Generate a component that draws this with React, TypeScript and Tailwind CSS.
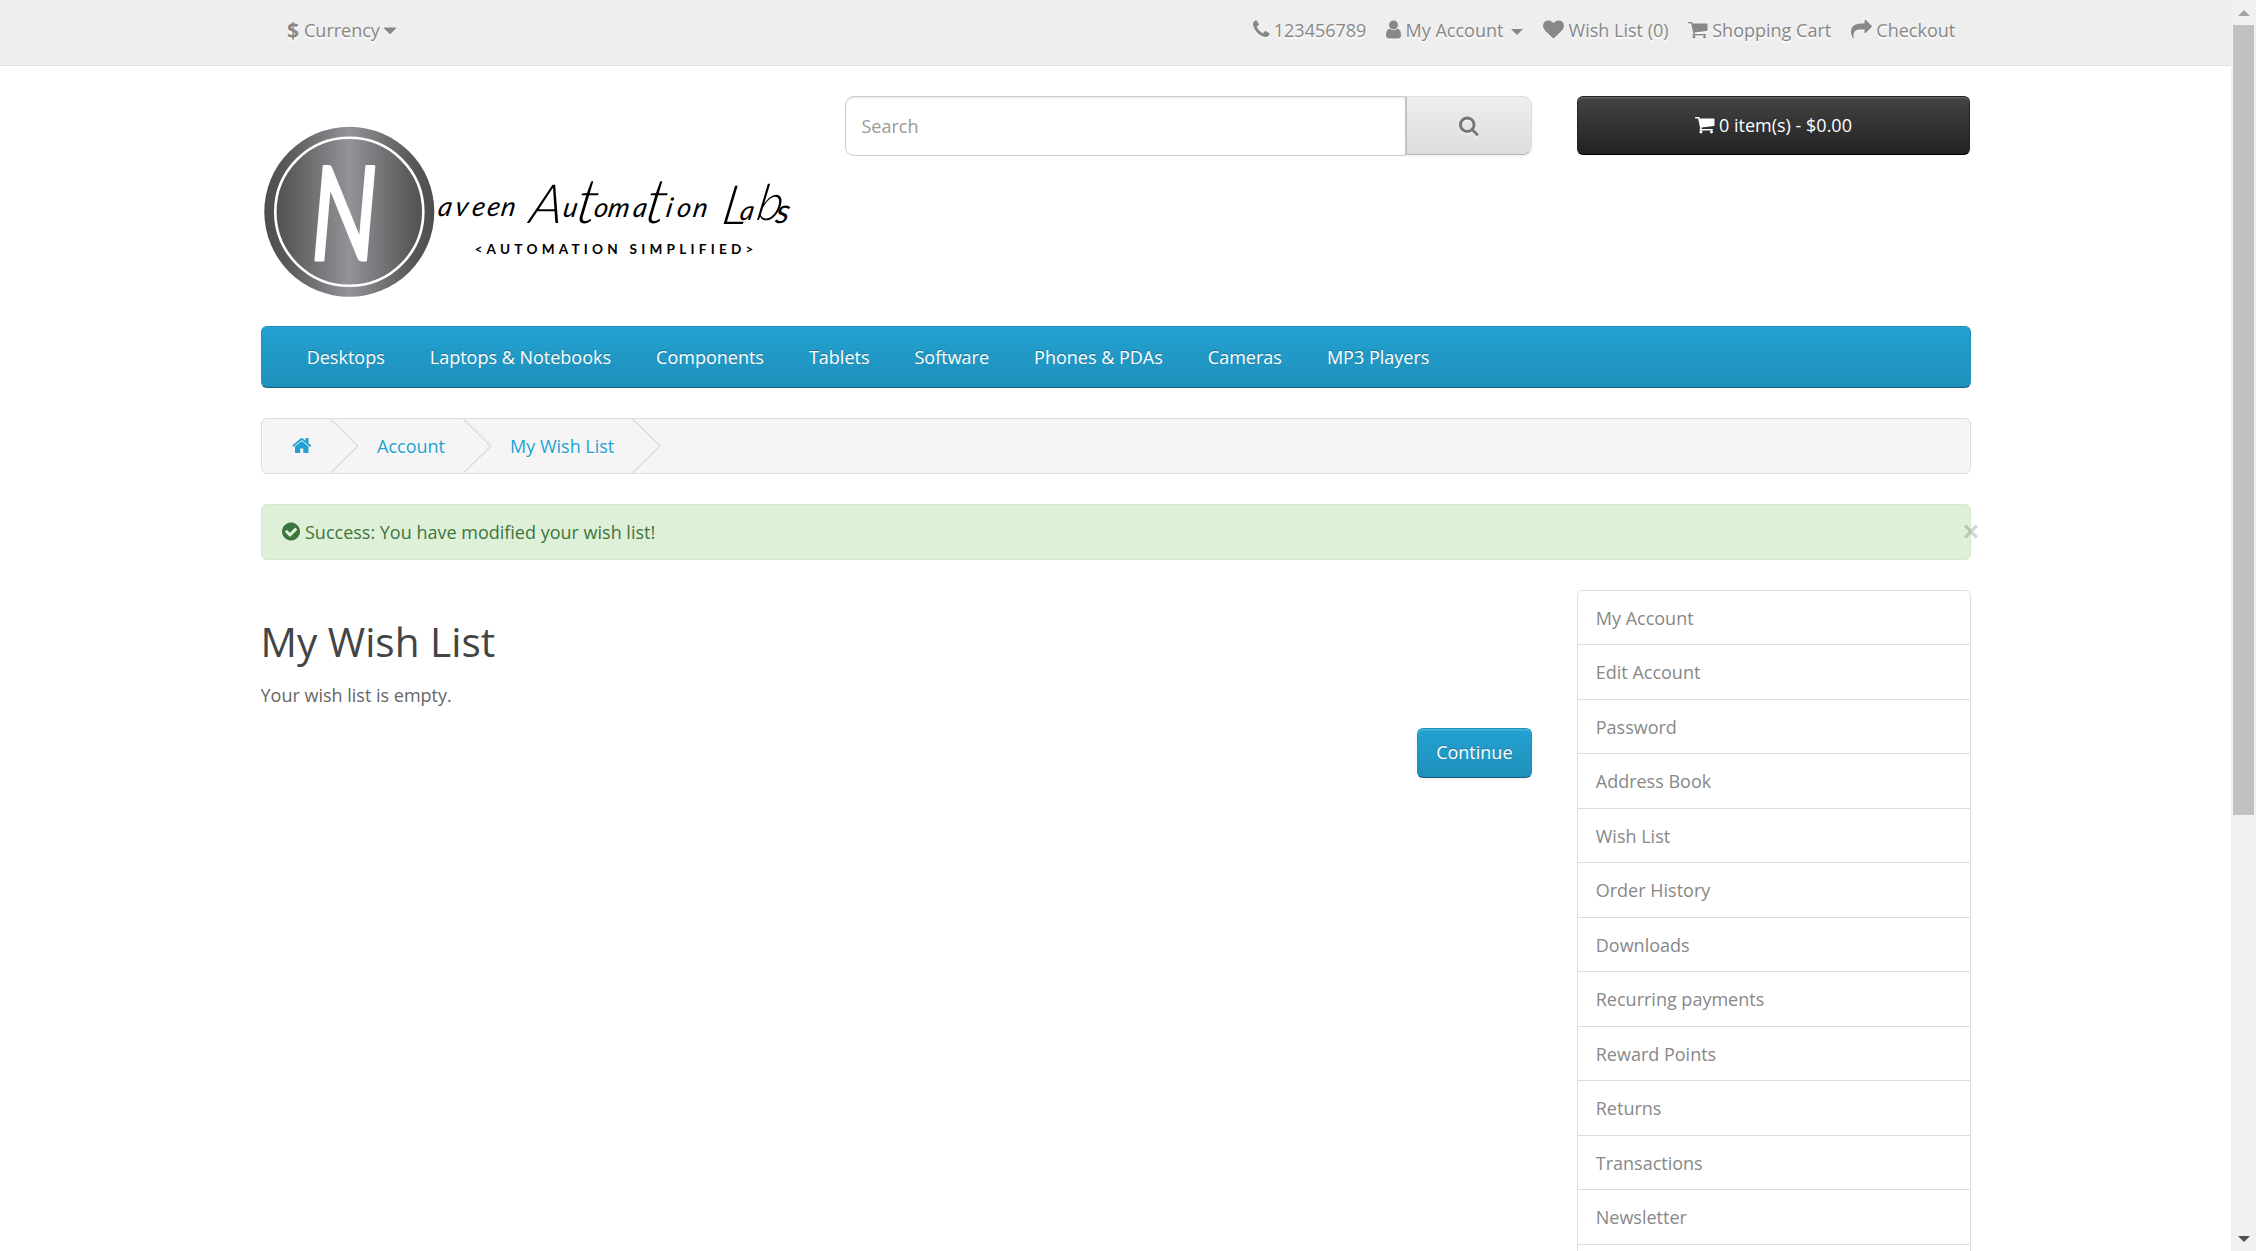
import React from "react";

type IconProps = { box: string; d: string; w: string };

function Icon({ box, d, w }: IconProps) {
  return (
    <svg
      viewBox={box}
      className={`inline-block h-[21px] shrink-0 fill-current align-[-3px] ${w}`}
      aria-hidden="true"
      overflow="visible"
    >
      <path d={d} />
    </svg>
  );
}

const ICONS = {
  phone: {
    box: "192 0 1408 1792",
    w: "w-[16.5px]",
    d: "M1600 1240q0 27-10 70.5t-21 68.5q-21 50-122 106-94 51-186 51-27 0-52.5-3.5t-57.5-12.5-47.5-14.5-55.5-20.5-49-18q-98-35-175-83-128-79-264.5-215.5t-215.5-264.5q-48-77-83-175-3-9-18-49t-20.5-55.5-14.5-47.5-12.5-57.5-3.5-52.5q0-92 51-186 56-101 106-122 25-11 68.5-21t70.5-10q14 0 21 3 18 6 53 76 11 19 30 54t35 63.5 31 53.5q3 4 17.5 25t21.5 35.5 7 28.5q0 20-28.5 50t-62 55-62 53-28.5 46q0 9 5 22.5t8.5 20.5 14 24 11.5 19q76 137 174 235t235 174q2 1 19 11.5t24 14 20.5 8.5 22.5 5q18 0 46-28.5t53-62 55-62 50-28.5q14 0 28.5 7t35.5 21.5 25 17.5q25 15 53.5 31t63.5 35 54 30q70 35 76 53 3 7 3 21z",
  },
  user: {
    box: "256 0 1280 1792",
    w: "w-[15px]",
    d: "M1536 1399q0 109-62.5 187t-150.5 78h-854q-88 0-150.5-78t-62.5-187q0-85 8.5-160.5t31.5-152 58.5-131 94-89 134.5-34.5q131 128 313 128t313-128q76 0 134.5 34.5t94 89 58.5 131 31.5 152 8.5 160.5zm-256-887q0 159-112.5 271.5t-271.5 112.5-271.5-112.5-112.5-271.5 112.5-271.5 271.5-112.5 271.5 112.5 112.5 271.5z",
  },
  heart: {
    box: "0 0 1792 1792",
    w: "w-[21px]",
    d: "M896 1664q-26 0-44-18l-624-602q-10-8-27.5-26t-55.5-65.5-68-97.5-53.5-121-23.5-138q0-220 127-344t351-124q62 0 126.5 21.5t120 58 95.5 68.5 76 68q36-36 76-68t95.5-68.5 120-58 126.5-21.5q224 0 351 124t127 344q0 221-229 450l-623 600q-18 18-44 18z",
  },
  cart: {
    box: "64 0 1664 1792",
    w: "w-[19.5px]",
    d: "M704 1536q0 52-38 90t-90 38-90-38-38-90 38-90 90-38 90 38 38 90zm896 0q0 52-38 90t-90 38-90-38-38-90 38-90 90-38 90 38 38 90zm128-1088v512q0 24-16.5 42.5t-40.5 21.5l-1044 122q13 60 13 70 0 16-24 64h920q26 0 45 19t19 45-19 45-45 19h-1024q-26 0-45-19t-19-45q0-11 8-31.5t16-36 21.5-40 15.5-29.5l-177-823h-204q-26 0-45-19t-19-45 19-45 45-19h256q16 0 28.5 6.5t19.5 15.5 13 24.5 8 26 5.5 29.5 4.5 26h1201q26 0 45 19t19 45z",
  },
  share: {
    box: "0 0 1792 1792",
    w: "w-[21px]",
    d: "M1792 640q0 26-19 45l-512 512q-19 19-45 19t-45-19-19-45v-256h-224q-98 0-175.5 6t-154 21.5-133 42.5-105.5 69.5-80 101-48.5 138.5-17.5 181q0 55 5 123 0 6 2.5 23.5t2.5 26.5q0 15-8.5 25t-23.5 10q-16 0-28-17-7-9-13-22t-13.5-30-10.5-24q-127-285-127-451 0-199 53-333 162-403 875-403h224v-256q0-26 19-45t45-19 45 19l512 512q19 19 19 45z",
  },
  search: {
    box: "64 0 1664 1792",
    w: "w-[19.5px]",
    d: "M1216 832q0-185-131.5-316.5t-316.5-131.5-316.5 131.5-131.5 316.5 131.5 316.5 316.5 131.5 316.5-131.5 131.5-316.5zm512 832q0 52-38 90t-90 38q-54 0-90-38l-343-342q-179 124-399 124-143 0-273.5-55.5t-225-150-150-225-55.5-273.5 55.5-273.5 150-225 225-150 273.5-55.5 273.5 55.5 225 150 150 225 55.5 273.5q0 220-124 399l343 343q37 37 37 90z",
  },
  home: {
    box: "64 0 1664 1792",
    w: "w-[19.5px]",
    d: "M1472 992v480q0 26-19 45t-45 19h-384v-384h-256v384h-384q-26 0-45-19t-19-45v-480q0-1 .5-3t.5-3l575-474 575 474q1 2 1 6zm223-69l-62 74q-8 9-21 11h-3q-13 0-21-7l-692-577-692 577q-12 8-24 7-13-2-21-11l-62-74q-8-10-7-23.5t11-21.5l719-599q32-26 76-26t76 26l244 204v-195q0-14 9-23t23-9h192q14 0 23 9t9 23v408l219 182q10 8 11 21.5t-7 23.5z",
  },
  check: {
    box: "128 0 1536 1792",
    w: "w-[18px]",
    d: "M1412 734q0-28-18-46l-91-90q-19-19-45-19t-45 19l-408 407-226-226q-19-19-45-19t-45 19l-91 90q-18 18-18 46 0 27 18 45l362 362q19 19 45 19 27 0 46-19l543-543q18-18 18-45zm252 162q0 209-103 385.5t-279.5 279.5-385.5 103-385.5-103-279.5-279.5-103-385.5 103-385.5 279.5-279.5 385.5-103 385.5 103 279.5 279.5 103 385.5z",
  },
  caret: {
    box: "384 0 1024 1792",
    w: "w-[12px]",
    d: "M1408 704q0 26-19 45l-448 448q-19 19-45 19t-45-19l-448-448q-19-19-19-45t19-45 45-19h896q26 0 45 19t19 45z",
  },
};

const MENU = [
  "Desktops",
  "Laptops & Notebooks",
  "Components",
  "Tablets",
  "Software",
  "Phones & PDAs",
  "Cameras",
  "MP3 Players",
];

const ACCOUNT_LINKS = [
  "My Account",
  "Edit Account",
  "Password",
  "Address Book",
  "Wish List",
  "Order History",
  "Downloads",
  "Recurring payments",
  "Reward Points",
  "Returns",
  "Transactions",
  "Newsletter",
];

function Chevron() {
  return (
    <svg viewBox="0 0 29 54" className="h-[54px] w-[29px] shrink-0" fill="none" stroke="#dddddd" strokeWidth="1.5">
      <path d="M0.5 0L28 27L0.5 54" />
    </svg>
  );
}

function Logo() {
  return (
    <svg viewBox="261 120 560 184" className="block h-[184px] w-[560px]">
      <defs>
        <linearGradient id="badge" x1="0" x2="1" y1="0" y2="0">
          <stop offset="0" stopColor="#4f4e4d" />
          <stop offset="0.12" stopColor="#575756" />
          <stop offset="0.5" stopColor="#919398" />
          <stop offset="0.88" stopColor="#575756" />
          <stop offset="1" stopColor="#4f4e4d" />
        </linearGradient>
      </defs>
      <circle cx="349.3" cy="211.8" r="85" fill="url(#badge)" />
      <circle cx="349.3" cy="211.8" r="74" fill="none" stroke="#fff" strokeWidth="2.6" />
      <text
        transform="translate(311 260) scale(0.72 1)"
        fontFamily="Lato, sans-serif"
        fontStyle="italic"
        fontWeight="400"
        fontSize="130"
        fill="#fff"
        stroke="#fff"
        strokeWidth="3"
        strokeLinejoin="round"
      >
        N
      </text>
      <g
        fontFamily="Lato, sans-serif"
        fontStyle="italic"
        fontWeight="400"
        fontSize="27"
        fill="#000"
      >
        <text transform="translate(437 216) skewX(-10)" x="0 17 34 49 63">
          aveen
        </text>
        <text
          transform="translate(531 217) skewX(-10)"
          x="-2 31 44 62 76 101 113 134 145 161"
          y="6 0 6 0 0 0 6 0 0 0"
        >
          <tspan fontSize="54" fontWeight="300">A</tspan>u<tspan fontSize="62" fontWeight="300">t</tspan>oma
          <tspan fontSize="62" fontWeight="300">t</tspan>ion
        </text>
        <text transform="translate(721 220) skewX(-10)" x="0 18 34 54" y="4 0 0 3">
          <tspan fontSize="54" fontWeight="300">L</tspan>a<tspan fontSize="50" fontWeight="300">b</tspan>
          <tspan fontSize="34">s</tspan>
        </text>
      </g>
      <text
        x="474.5"
        y="254.3"
        fontFamily="Lato, sans-serif"
        fontWeight="700"
        fontSize="13.6"
        textLength="279"
        fill="#000"
      >
        &lt;AUTOMATION SIMPLIFIED&gt;
      </text>
    </svg>
  );
}

export default function App() {
  return (
    <div className="flex h-[1251px] w-[2256px] overflow-hidden bg-white font-['Open_Sans',sans-serif] text-[18px] leading-[30px] text-[#666666]">
      <div className="flex min-w-0 flex-1 flex-col">
        <nav className="h-[66px] shrink-0 border-b border-[#e2e2e2] bg-[#eeeeee] text-[#888888]">
          <div className="mx-auto flex h-[60px] w-[1710px] items-center justify-between pr-[15.3px] pl-[26.5px] whitespace-nowrap [text-shadow:0_1.5px_0_#fff] [&_svg]:[filter:drop-shadow(0_1.5px_0_#fff)]">
            <div className="flex items-center">
              <span className="mr-[5px] text-[21px] font-bold">$</span>
              <span className="mr-[4.5px]">Currency</span>
              <Icon {...ICONS.caret} />
            </div>
            <div className="flex items-center gap-[19.5px]">
              <span>
                <Icon {...ICONS.phone} /> 123456789
              </span>
              <span className="flex items-center">
                <span>
                  <Icon {...ICONS.user} /> My Account
                </span>
                <span className="mt-[4px] ml-[8px] border-x-[6px] border-t-[6px] border-x-transparent border-t-[#888888]" />
              </span>
              <span>
                <Icon {...ICONS.heart} /> Wish List (0)
              </span>
              <span>
                <Icon {...ICONS.cart} /> Shopping Cart
              </span>
              <span>
                <Icon {...ICONS.share} /> Checkout
              </span>
            </div>
          </div>
        </nav>

        <div className="mx-auto flex min-h-0 w-[1710px] flex-1 flex-col">
          <header className="flex h-[260px] shrink-0 items-start pt-[30px]">
            <div className="w-[584.5px] pt-[24px]">
              <Logo />
            </div>
            <div className="flex w-[687px]">
              <div className="flex h-[60px] flex-1 items-center rounded-l-[9px] border border-[#cccccc] bg-white px-[15.5px] text-[#999999] shadow-[inset_0_1.5px_1.5px_rgba(0,0,0,0.075)]">
                Search
              </div>
              <button className="flex h-[59px] w-[126.5px] items-center justify-center rounded-r-[9px] border border-[#dddddd] border-b-[#b3b3b3] border-l-[#bfbfbf] bg-linear-to-b from-[#eeeeee] to-[#dddddd] text-[#777777] shadow-[0_1.5px_3px_rgba(0,0,0,0.05)] [&_svg]:[filter:drop-shadow(0_1.5px_0_#fff)]">
                <Icon {...ICONS.search} />
              </button>
            </div>
            <button className="mr-[0.6px] ml-auto h-[59px] w-[393px] rounded-[6px] border border-[#222222] border-b-black bg-linear-to-b from-[#444444] to-[#222222] pb-px text-white shadow-[inset_0_1.5px_0_rgba(255,255,255,0.15)]">
              <Icon {...ICONS.cart} /> 0 item(s) - $0.00
            </button>
          </header>

          <nav className="flex h-[62px] shrink-0 items-center gap-[45px] rounded-[6px] border border-[#1f90bb] border-b-[#145e7a] bg-linear-to-b from-[#23a1d1] to-[#1f90bb] pl-[45.2px] whitespace-nowrap text-white [text-shadow:0_-1px_0_rgba(0,0,0,0.25)]">
            {MENU.map((item) => (
              <a key={item}>{item}</a>
            ))}
          </nav>

          <div className="mt-[30px] flex h-[56px] shrink-0 items-center rounded-[6px] border border-[#dddddd] bg-[#f5f5f5] whitespace-nowrap text-[#23a1d1] [text-shadow:0_1.5px_0_#fff]">
            <span className="w-[68px] pl-[30.8px]">
              <Icon {...ICONS.home} />
            </span>
            <Chevron />
            <span className="ml-[18.5px] w-[85.5px]">Account</span>
            <Chevron />
            <span className="ml-[18.5px] w-[121.5px]">My Wish List</span>
            <Chevron />
          </div>

          <div className="relative mt-[30px] flex h-[56px] shrink-0 items-center rounded-[6px] border border-[#d6e9c6] bg-[#dff0d8] pl-[20.8px] text-[#3c763d]">
            <span>
              <Icon {...ICONS.check} /> Success: You have modified your wish list!
            </span>
            <span className="absolute top-[10px] right-[-10.5px] text-[31.5px] leading-[31.5px] font-bold text-black opacity-[0.16] [text-shadow:0_1.5px_0_#fff]">
              ×
            </span>
          </div>

          <div className="mt-[30px] flex min-h-0 flex-1 items-start justify-between overflow-hidden">
            <main className="flex w-[1271.5px] flex-col pt-[29px]">
              <h2 className="text-[40.5px] leading-[45px] text-[#444444]">My Wish List</h2>
              <p className="mt-[16px]">Your wish list is empty.</p>
              <button className="mt-[18px] h-[50px] self-end rounded-[6px] border border-[#1f90bb] border-b-[#145e7a] bg-linear-to-b from-[#23a1d1] to-[#1f90bb] px-[18.5px] pb-[2px] text-white shadow-[inset_0_1.5px_0_rgba(255,255,255,0.2),0_1.5px_3px_rgba(0,0,0,0.05)] [text-shadow:0_-1px_0_rgba(0,0,0,0.25)]">
                Continue
              </button>
            </main>
            <aside className="-mt-[0.1px] w-[393.75px] rounded-t-[6px] border-x border-[#dddddd] text-[#888888]">
              {ACCOUNT_LINKS.map((item) => (
                <a
                  key={item}
                  className="block h-[54.5px] border-t border-[#dddddd] pt-[12px] pl-[18px] first:-mx-px first:rounded-t-[6px] first:px-[19px]"
                >
                  {item}
                </a>
              ))}
              <div className="h-[54.5px] border-t border-[#dddddd]" />
            </aside>
          </div>
        </div>
      </div>

      <div className="flex w-[25px] shrink-0 flex-col items-center bg-[#f1f1f1]">
        <div className="flex h-[25px] items-center">
          <span className="border-x-[6px] border-b-[6px] border-x-transparent border-b-[#a3a3a3]" />
        </div>
        <div className="h-[790px] w-[21px] bg-[#c1c1c1]" />
        <div className="mt-auto flex h-[25px] items-center">
          <span className="border-x-[6px] border-t-[6px] border-x-transparent border-t-[#505050]" />
        </div>
      </div>
    </div>
  );
}
